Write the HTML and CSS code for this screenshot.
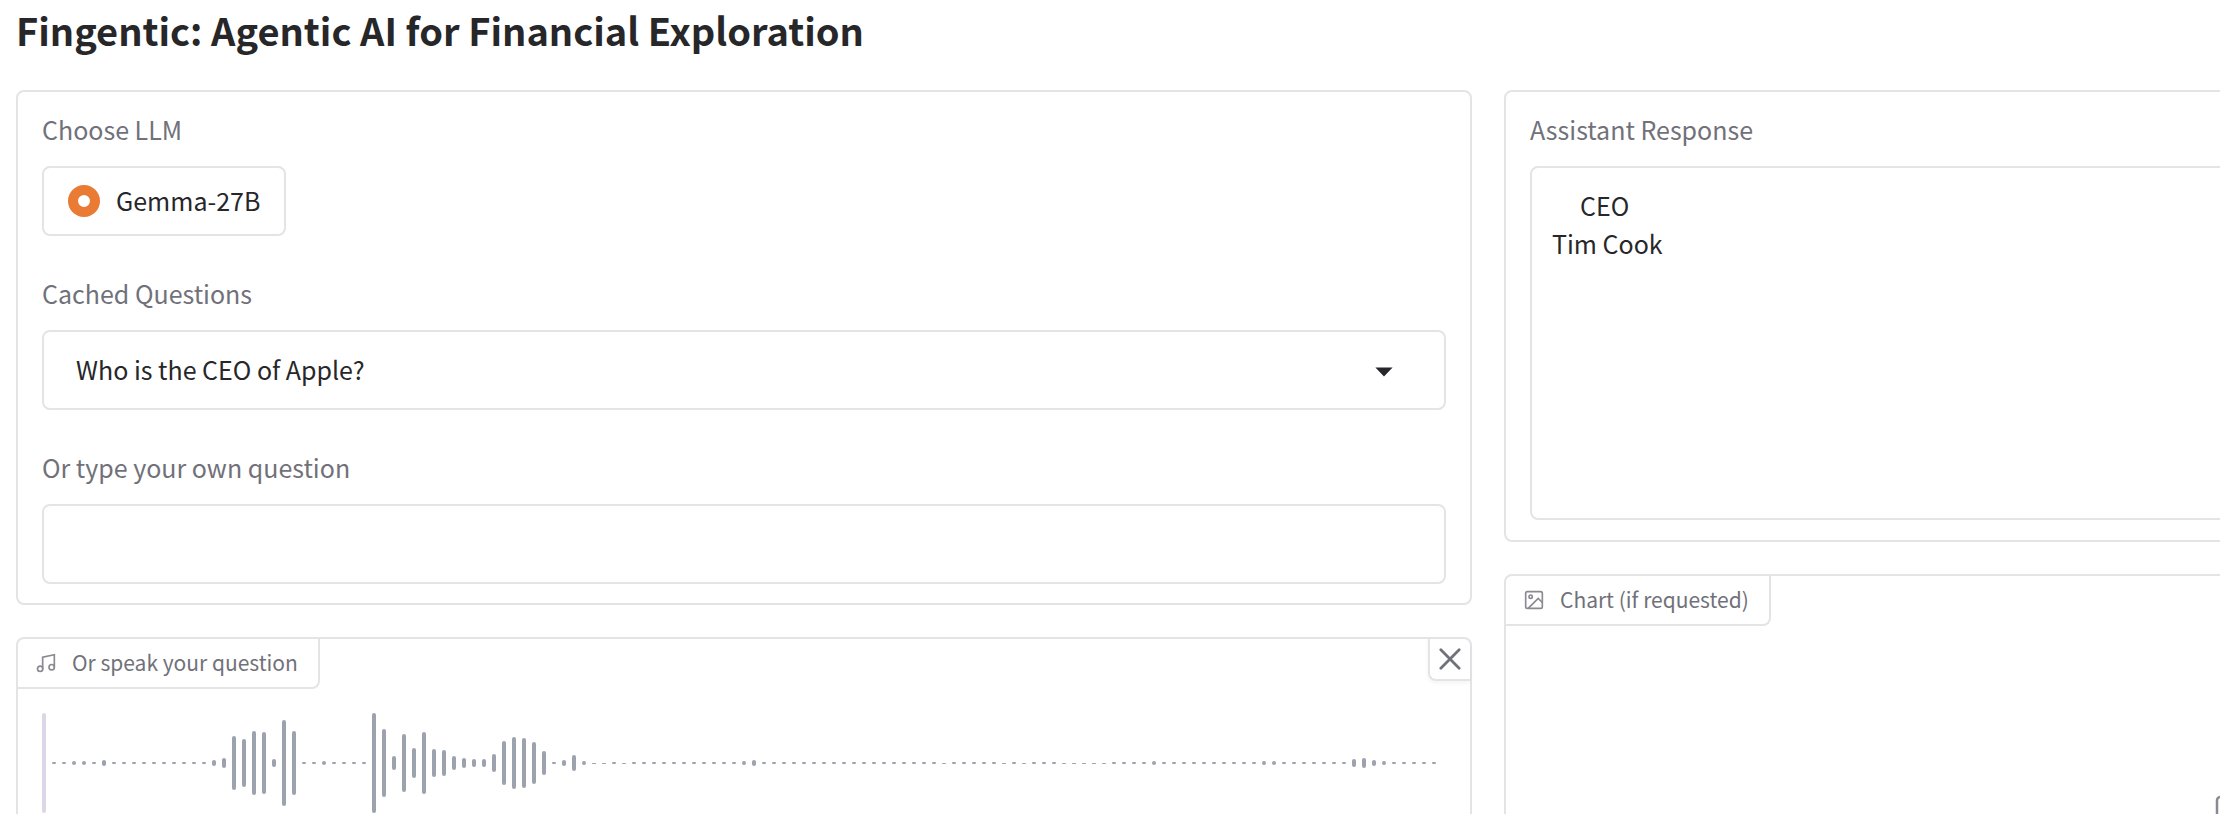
FILE: index.html
```
<!DOCTYPE html>
<html lang="en">
<head>
<meta charset="utf-8">
<title>Fingentic: Agentic AI for Financial Exploration</title>
<link rel="stylesheet" href="styles.css">
</head>
<body>
<h1 class="title">Fingentic: Agentic AI for Financial Exploration</h1>
<main class="columns">
  <div class="column">
    <section class="card form">
      <fieldset class="field">
        <legend class="label">Choose LLM</legend>
        <label class="option"><input class="radio" type="radio" name="llm" checked><span class="option-text">Gemma-27B</span></label>
      </fieldset>
      <div class="field">
        <label class="label" for="cached">Cached Questions</label>
        <div class="picker">
          <select class="control select" id="cached"><option>Who is the CEO of Apple?</option></select>
          <svg class="arrow" viewBox="0 0 18 18" aria-hidden="true"><path d="M4.700 7.800h8.600L9 12.300z"/></svg>
        </div>
      </div>
      <div class="field">
        <label class="label" for="own">Or type your own question</label>
        <input class="control" id="own" type="text">
      </div>
    </section>
    <section class="card audio">
      <header class="bar">
        <h2 class="tag">
          <svg class="tag-icon" viewBox="0 0 24 24" aria-hidden="true"><path d="M8 19V5l14-3v15"/><circle cx="5" cy="19" r="3.200"/><circle cx="18.800" cy="17" r="3.200"/></svg>
          <span class="tag-text">Or speak your question</span>
        </h2>
        <button class="close" type="button" aria-label="Clear">
          <svg class="close-icon" viewBox="0 0 24 24" aria-hidden="true"><path d="M2 2L22 22M22 2L2 22"/></svg>
        </button>
      </header>
      <div class="wave" id="wave"></div>
    </section>
  </div>
  <div class="column">
    <section class="card response">
      <label class="label" for="answer">Assistant Response</label>
      <textarea class="control answer" id="answer" readonly>     CEO
Tim Cook</textarea>
    </section>
    <section class="card chart">
      <header class="bar">
        <h2 class="tag">
          <svg class="tag-icon" viewBox="0 0 24 24" aria-hidden="true"><rect x="2" y="2" width="20" height="20" rx="2"/><circle cx="8" cy="8" r="2"/><path d="M22 15l-5-5L5 22"/></svg>
          <span class="tag-text">Chart (if requested)</span>
        </h2>
      </header>
      <div class="empty">
        <svg class="empty-icon" viewBox="0 0 24 24" aria-hidden="true"><rect x="3" y="3" width="18" height="18" rx="2"/><circle cx="8.500" cy="8.500" r="1.500"/><path d="M21 15l-5-5L5 21"/></svg>
      </div>
    </section>
  </div>
</main>
<script src="wave.js"></script>
</body>
</html>
```
FILE: styles.css
```
* { box-sizing: border-box; }

body {
  margin: 0;
  height: 100vh;
  overflow: hidden;
  background: #fff;
  color: #27272a;
  font-family: "Noto Sans CJK SC", "Noto Sans", sans-serif;
  font-size: 25px;
  line-height: 38px;
}

.title {
  margin: 0;
  padding: 4px 16px 34px;
  font-size: 38px;
  line-height: 52px;
  font-weight: 600;
}

.columns {
  display: grid;
  grid-template-columns: 1fr 1fr;
  align-items: start;
  gap: 32px;
  width: 133.3334%;
  padding-left: 16px;
}

.column {
  display: flex;
  flex-direction: column;
  gap: 32px;
  min-width: 0;
}

.card {
  border: 2px solid #e4e4e7;
  border-radius: 8px;
  background: #fff;
}

.form {
  display: flex;
  flex-direction: column;
  gap: 38px;
  padding: 18px 24px 19px;
}

.field {
  display: flex;
  flex-direction: column;
  align-items: flex-start;
  min-width: 0;
  margin: 0;
  padding: 0;
  border: 0;
}

.label {
  display: block;
  padding: 0;
  margin-bottom: 18px;
  color: #71717a;
}

.option {
  display: flex;
  align-items: center;
  gap: 16px;
  height: 70px;
  padding: 0 24px;
  border: 2px solid #e4e4e7;
  border-radius: 8px;
}

.option-text,
.tag-text {
  padding-bottom: 3px;
}

.radio {
  appearance: none;
  width: 32px;
  height: 32px;
  margin: 0;
  border: 10px solid #e97b35;
  border-radius: 50%;
  background: #fff;
}

.control {
  display: block;
  width: 100%;
  height: 80px;
  margin: 0;
  padding: 0 32px 2px;
  border: 2px solid #e4e4e7;
  border-radius: 8px;
  background: #fff;
  color: inherit;
  font: inherit;
  outline: none;
}

.picker {
  display: grid;
  align-items: center;
  width: 100%;
}

.select {
  grid-area: 1 / 1;
  appearance: none;
}

.arrow {
  grid-area: 1 / 1;
  justify-self: end;
  width: 36px;
  height: 36px;
  margin-right: 44px;
  fill: #27272a;
  pointer-events: none;
}

.bar {
  display: flex;
  justify-content: space-between;
  align-items: flex-start;
}

.tag {
  display: flex;
  align-items: center;
  gap: 16px;
  height: 50px;
  margin: 0;
  padding: 0 20px 0 18px;
  border: solid #e4e4e7;
  border-width: 0 2px 2px 0;
  border-radius: 0 0 8px 0;
  color: #71717a;
  font-size: 21px;
  font-weight: 400;
}

.tag-icon {
  width: 20px;
  height: 20px;
  fill: none;
  stroke: #8a8a92;
  stroke-width: 2;
}

.close {
  display: grid;
  place-items: center;
  width: 42px;
  height: 42px;
  padding: 0;
  border: solid #e4e4e7;
  border-width: 0 0 2px 2px;
  border-radius: 0 8px 0 8px;
  background: #fff;
  box-shadow: 0 2px 4px rgba(0, 0, 0, 0.05);
}

.close-icon {
  width: 22px;
  height: 22px;
  fill: none;
  stroke: #71717a;
  stroke-width: 3;
  stroke-linecap: round;
}

.audio {
  min-height: 240px;
}

.wave {
  display: flex;
  align-items: center;
  gap: 6px;
  height: 100px;
  margin: 24px 24px 0;
  overflow: hidden;
}

.beat {
  flex: none;
  width: 4px;
  border-radius: 2px;
  background: #9ca3af;
}

.beat-played {
  background: #ddd6e8;
}

.response {
  padding: 18px 24px 20px;
}

.answer {
  height: 354px;
  padding: 18px 20px;
  resize: none;
}

.chart {
  display: grid;
  min-height: 476px;
}

.chart .bar,
.empty {
  grid-area: 1 / 1;
}

.empty {
  display: grid;
  place-items: center;
}

.empty-icon {
  width: 40px;
  height: 40px;
  fill: none;
  stroke: #8a8a92;
  stroke-width: 1.500;
}
```
FILE: wave.js
```
const LENGTH = 140;
const QUIET = 2;

// Louder samples, keyed by position in the recording.
const peaks = {
  0: 100, 3: 4, 4: 4, 6: 6, 17: 6, 18: 10, 19: 54, 20: 48, 21: 64, 22: 62,
  23: 8, 24: 86, 25: 64, 28: 4, 33: 100, 34: 68, 35: 14, 36: 58, 37: 30,
  38: 62, 39: 28, 40: 26, 41: 14, 42: 10, 43: 8, 44: 8, 45: 18, 46: 44,
  47: 52, 48: 50, 49: 42, 50: 24, 52: 6, 53: 16, 54: 4, 55: 1, 56: 1,
  58: 1, 70: 4, 71: 6, 90: 1, 96: 1, 98: 1, 102: 1, 103: 1, 104: 1,
  105: 1, 106: 1, 111: 4, 122: 4, 123: 4, 131: 8, 132: 10, 133: 6, 134: 4
};

const wave = document.getElementById("wave");
for (let i = 0; i < LENGTH; i++) {
  const beat = document.createElement("span");
  beat.className = i === 0 ? "beat beat-played" : "beat";
  beat.style.height = (peaks[i] || QUIET) + "px";
  wave.append(beat);
}
```
